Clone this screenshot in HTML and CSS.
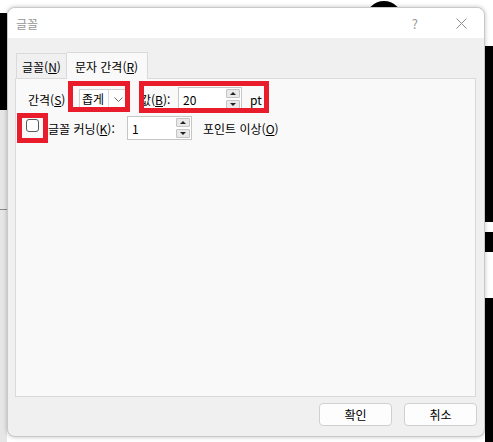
FILE: index.html
```html
<!DOCTYPE html>
<html lang="ko">
<head>
    <meta charset="UTF-8">
    <title>글꼴</title>
    <link rel="stylesheet" href="styles.css">
</head>
<body>
    <!-- 뒤쪽 문서 일부 -->
    <div class="bg-shape bg-left-top"></div>
    <div class="bg-shape bg-left-strip"></div>
    <div class="bg-shape bg-left-line"></div>
    <div class="bg-shape bg-top-circle"></div>
    <div class="bg-shape bg-right-a"></div>
    <div class="bg-shape bg-right-b"></div>
    <div class="bg-shape bg-right-c"></div>

    <div class="dialog">
        <div class="titlebar">
            <span class="title">글꼴</span>
            <span class="help">?</span>
            <span class="close">
                <svg width="11" height="11" viewBox="0 0 11 11"><path d="M0.5 0.5L10.5 10.5M10.5 0.5L0.5 10.5" stroke="#8c8c8c" stroke-width="1" fill="none"/></svg>
            </span>
        </div>

        <div class="content">
            <div class="tabs">
                <div class="tab">글꼴(<u>N</u>)</div>
                <div class="tab active">문자 간격(<u>R</u>)</div>
            </div>
            <div class="panel">
                <div class="row row-spacing">
                    <span class="lbl lbl-spacing">간격(<u>S</u>)</span>
                    <div class="select">
                        <span class="select-text">좁게</span>
                        <span class="select-arrow">
                            <svg width="9" height="5" viewBox="0 0 9 5"><path d="M0.5 0.5L4.5 4.5L8.5 0.5" stroke="#707070" stroke-width="1" fill="none"/></svg>
                        </span>
                    </div>
                    <span class="lbl lbl-value">값(<u>B</u>):</span>
                    <div class="spin spin-value">
                        <span class="spin-text">20</span>
                        <div class="spin-btns">
                            <span class="spin-btn"><i class="tri-up"></i></span>
                            <span class="spin-btn"><i class="tri-down"></i></span>
                        </div>
                    </div>
                    <span class="lbl unit">pt</span>
                </div>
                <div class="row row-kerning">
                    <span class="checkbox"></span>
                    <span class="lbl lbl-kerning">글꼴 커닝(<u>K</u>):</span>
                    <div class="spin spin-kern">
                        <span class="spin-text">1</span>
                        <div class="spin-btns">
                            <span class="spin-btn"><i class="tri-up"></i></span>
                            <span class="spin-btn"><i class="tri-down"></i></span>
                        </div>
                    </div>
                    <span class="lbl lbl-points">포인트 이상(<u>O</u>)</span>
                </div>
            </div>
        </div>

        <div class="footer">
            <button class="btn">확인</button>
            <button class="btn">취소</button>
        </div>
    </div>

    <!-- 빨간 강조 표시 -->
    <div class="mark mark-type"></div>
    <div class="mark mark-value"></div>
    <div class="mark mark-check"></div>
</body>
</html>
```

FILE: styles.css
```css
* {
    box-sizing: border-box;
    margin: 0;
    padding: 0;
}

body {
    position: relative;
    width: 493px;
    height: 442px;
    overflow: hidden;
    background: #ffffff;
    font-family: "Noto Sans CJK KR", "Noto Sans", sans-serif;
    font-size: 12px;
    color: #000;
    padding: 7px 0 0 7px;
}

u {
    text-decoration: underline;
    text-underline-offset: 1px;
}

/* 뒤 배경 */
.bg-shape {
    position: absolute;
    background: #000;
}

.bg-left-top {
    left: 0;
    top: 13px;
    width: 7px;
    height: 97px;
}

.bg-left-strip {
    left: 0;
    top: 110px;
    width: 7px;
    height: 332px;
    background: #e6e6e6;
}

.bg-left-line {
    left: 0;
    top: 209px;
    width: 7px;
    height: 1px;
    background: #8a8a8a;
}

.bg-top-circle {
    left: 366px;
    top: 1px;
    width: 36px;
    height: 36px;
    border-radius: 50%;
}

.bg-right-a {
    left: 485px;
    top: 46px;
    width: 8px;
    height: 176px;
}

.bg-right-b {
    left: 485px;
    top: 232px;
    width: 8px;
    height: 20px;
}

.bg-right-c {
    left: 485px;
    top: 298px;
    width: 8px;
    height: 144px;
}

/* 대화상자 */
.dialog {
    position: relative;
    width: 478px;
    height: 430px;
    background: #f0f0f0;
    border: 1px solid #c9c9c9;
    border-radius: 8px;
    box-shadow: 0 0 4px rgba(0, 0, 0, 0.25);
    display: flex;
    flex-direction: column;
    overflow: hidden;
}

.titlebar {
    height: 30px;
    background: #fff;
    display: flex;
    align-items: center;
    padding-left: 8px;
    flex-shrink: 0;
}

.title {
    color: #979797;
    font-size: 12px;
}

.help {
    margin-left: auto;
    color: #9a9a9a;
    font-size: 13px;
}

.close {
    display: flex;
    margin-left: 38px;
    margin-right: 17px;
}

.content {
    padding: 14px 8px 0 7px;
}

.tabs {
    display: flex;
    height: 26px;
    align-items: flex-start;
    padding-left: 1px;
}

.tab {
    height: 25px;
    margin-top: 1px;
    padding: 0 5px 0 5px;
    border: 1px solid #dadada;
    border-bottom: none;
    background: #f0f0f0;
    display: flex;
    align-items: center;
    white-space: nowrap;
}

.tab.active {
    position: relative;
    z-index: 1;
    height: 27px;
    margin-top: 0;
    padding: 0 9px 0 8px;
    background: #f9f9f9;
    border-left: none;
}

.panel {
    height: 319px;
    background: #f9f9f9;
    border: 1px solid #dadada;
    padding-top: 8px;
}

.row {
    display: flex;
    align-items: center;
    height: 24px;
}

.row-kerning {
    margin-top: 5px;
}

.lbl {
    white-space: nowrap;
}

.lbl-spacing {
    margin-left: 12px;
    width: 51px;
}

.lbl-value {
    margin-left: 11px;
    width: 38px;
}

.unit {
    margin-left: 8px;
}

.select {
    width: 50px;
    height: 21px;
    border: 1px solid #cfcfcf;
    background: #fff;
    display: flex;
}

.select-text {
    width: 29px;
    padding-left: 2px;
    line-height: 18px;
    border-right: 1px solid #dcdcdc;
}

.select-arrow {
    flex: 1;
    display: flex;
    align-items: center;
    justify-content: center;
}

.spin {
    height: 24px;
    border: 1px solid #c6c6c6;
    background: #fff;
    display: flex;
    align-items: center;
    justify-content: space-between;
    padding: 0 1px 0 4px;
}

.spin-value {
    width: 64px;
}

.spin-kern {
    width: 65px;
}

.spin-btns {
    display: flex;
    flex-direction: column;
    gap: 2px;
}

.spin-btn {
    width: 14px;
    height: 9px;
    background: #e9e9e9;
    border: 1px solid #c4c4c4;
    border-radius: 1px;
    display: flex;
    align-items: center;
    justify-content: center;
}

.tri-up {
    width: 0;
    height: 0;
    border-left: 3px solid transparent;
    border-right: 3px solid transparent;
    border-bottom: 3px solid #222;
}

.tri-down {
    width: 0;
    height: 0;
    border-left: 3px solid transparent;
    border-right: 3px solid transparent;
    border-top: 3px solid #222;
}

.checkbox {
    width: 13px;
    height: 13px;
    margin-left: 10px;
    margin-bottom: 5px;
    border: 1px solid #5a5a5a;
    border-radius: 3px;
    background: #fff;
}

.lbl-kerning {
    margin-left: 9px;
    width: 79px;
}

.lbl-points {
    margin-left: 11px;
}

/* 하단 버튼 */
.footer {
    display: flex;
    justify-content: flex-end;
    gap: 12px;
    padding: 6px 7px 0 0;
}

.btn {
    width: 73px;
    height: 23px;
    font-family: inherit;
    font-size: 12px;
    color: #000;
    background: #fdfdfd;
    border: 1px solid #d0d0d0;
    border-radius: 4px;
}

/* 강조 표시 (위에 덮음) */
.mark {
    position: absolute;
    border: 5px solid #e81c2a;
}

.mark-type {
    left: 68px;
    top: 81px;
    width: 62px;
    height: 31px;
}

.mark-value {
    left: 139px;
    top: 81px;
    width: 130px;
    height: 32px;
}

.mark-check {
    left: 17px;
    top: 113px;
    width: 31px;
    height: 30px;
}
```
